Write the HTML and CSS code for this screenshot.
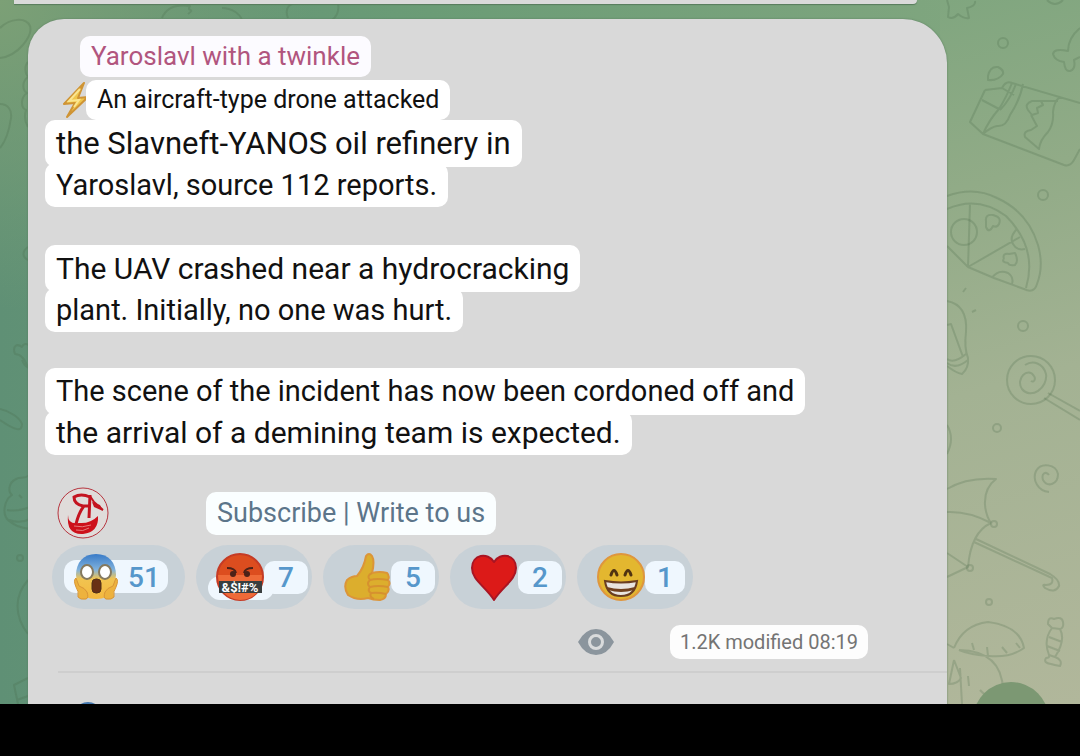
FILE: index.html
```html
<!DOCTYPE html>
<html lang="en">
<head>
<meta charset="utf-8">
<meta name="viewport" content="width=device-width, initial-scale=1">
<title>Yaroslavl with a twinkle</title>
<link rel="stylesheet" href="styles.css">
</head>
<body>
<main class="chat">
  <svg class="doodles doodles-left" width="400" height="704" viewBox="0 0 400 704" aria-hidden="true">
    <path d="M0 28C10 18 26 17 30 26C33 36 18 56 0 58M0 104C8 104 12 110 11 118C9 132 5 142 0 148M28 62C24 66 25 74 28 77C22 81 22 90 27 93C21 97 20 107 26 110C24 116 25 122 28 127M28 247C22 251 22 257 28 260M28 368C26 362 22 354 15 354C12 346 17 343 22 347C24 342 30 344 30 348M0 409C10 411 20 418 22 424C22 432 16 431 0 420M22 360C24 366 28 368 30 367M30 475C22 480 22 476 16 479C8 483 8 492 12 495C4 500 2 514 8 520C14 526 22 528 30 529M7 510Q18 512 30 507M9 520Q20 524 30 519M19 495L22 498M28 580C14 596 14 616 28 634M28 678L14 685L18 704M17 700L28 696M162 18C166 8 176 4 190 6C186 12 196 8 188 14M222 8C232 8 240 14 242 20M288 18C284 8 290 2 298 4M338 3Q340 14 332 20"/>
    <circle cx="20" cy="558" r="3"/>
  </svg>
  <svg class="doodles doodles-right" width="140" height="704" viewBox="0 0 140 704" aria-hidden="true">
    <path d="M7 0L9 7L8 17Q13 20 18 14Q24 19 29 18L27 8Q36 6 35 1M107 0Q115 8 123 0M140 28Q128 38 128 51Q114 48 113 54Q115 61 124 62Q125 72 130 71Q136 69 134 60L140 57"/>
    <path d="M48 76Q50 66 58 67Q64 70 63 74Q58 81 48 80ZM45 90L62 88Q66 80 72 83L140 103M45 90L30 122L43 134L124 165Q130 167 134 160L140 149M42 100L59 109M62 88L74 95M72 83Q66 98 59 109Q49 120 43 134M76 84Q70 100 60 110M83 84Q80 100 70 115Q66 127 57 126Q51 127 43 134M118 101L92 101Q84 104 88 110L92 115L98 113L97 108L103 105L101 101M91 115L97 126L91 130Q83 131 85 137L99 149Q100 140 108 132Q114 124 113 112Q114 101 120 97"/>
    <path d="M7 196Q34 186 57 198Q88 212 98 245Q104 266 97 284Q94 294 84 289L54 278L28 267L7 246M7 209Q38 195 66 216Q98 248 86 288M30 204L28 267L80 237M46 221Q45 214 53 215Q62 217 59 224Q57 228 53 226Q49 234 46 227ZM64 259Q62 253 69 254L75 253Q79 261 75 265Q69 266 68 263Q61 262 64 259M52 278Q58 269 68 273Q74 277 72 284M77 229Q69 237 73 244Q77 251 85 249"/>
    <circle cx="24" cy="232" r="13"/><circle cx="63" cy="43" r="5"/><circle cx="103" cy="195" r="5"/><circle cx="83" cy="326" r="5"/><circle cx="57" cy="428" r="4"/><circle cx="49" cy="602" r="3"/>
    <path d="M23 292L26 288M32 312L36 310M7 301Q28 305 26 332Q24 348 28 358Q29 368 22 374Q16 373 7 366M7 325L11 324L23 357M7 359Q14 364 26 354M7 363Q16 370 28 360M7 425Q15 438 7 454"/>
    <circle cx="91" cy="380" r="24"/>
    <path d="M91 381C94 383 96 379 94 376C88 366 75 379 82 389C91 400 108 388 106 374C103 363 93 360 85 365M108 393L140 411M104 398L140 420M109 492C98 491 92 480 96 471C101 462 116 464 118 474C118 484 108 488 103 480C101 473 106 471 109 475"/>
    <path d="M7 489Q27 477 56 479Q44 488 45 505Q46 516 51 523M7 512Q29 511 51 523M51 523Q31 532 28 567M7 553L28 567L7 577M36 539L110 574Q120 580 119 586Q115 594 105 588Q101 584 106 585Q114 585 112 578L34 542"/>
    <circle cx="54" cy="524" r="3"/><circle cx="30" cy="568" r="3"/>
    <path d="M14 648Q23 625 48 622Q80 626 84 648Q70 658 49 656Q31 655 19 650M32 643L34 650M48 656L47 647M67 653L62 647M80 648L76 643M7 644L14 648M19 650Q62 651 63 690Q64 700 54 698Q46 697 40 690M14 660L9 684Q18 684 21 678L14 660M20 668L22 704M28 676L29 686M108 624Q108 616 114 619Q122 616 123 622Q124 628 120 629Q126 640 115 657Q123 660 120 666Q114 665 111 664Q103 663 106 658Q110 658 109 655Q103 640 112 628ZM112 628L120 629M109 637L122 642M107 646L120 651M109 655L115 657"/>
  </svg>

  <div class="previous-message"></div>
  <article class="message">
    <h1 class="strip author">Yaroslavl with a twinkle</h1>
    <div class="lead">
      <svg class="bolt" width="30" height="38" viewBox="0 0 30 38" aria-hidden="true"><path d="M22 3L2 24L13 23L5 37L26 17L16 18Z" fill="#f0c64c" stroke="#cf9434" stroke-width="2" stroke-linejoin="round"/><path d="M18 9L7 21L17 20L12 27" fill="none" stroke="#fae58f" stroke-width="2"/></svg>
      <p class="strip small">An aircraft-type drone attacked</p>
    </div>
    <div class="paragraph">
      <p class="strip large">the Slavneft-YANOS oil refinery in</p>
      <p class="strip medium">Yaroslavl, source 112 reports.</p>
    </div>
    <div class="paragraph">
      <p class="strip body">The UAV crashed near a hydrocracking</p>
      <p class="strip medium">plant. Initially, no one was hurt.</p>
    </div>
    <div class="paragraph">
      <p class="strip wide-body">The scene of the incident has now been cordoned off and</p>
      <p class="strip medium closing">the arrival of a demining team is expected.</p>
    </div>
    <div class="links">
      <svg class="logo" width="52" height="52" viewBox="0 0 52 52" aria-hidden="true"><circle cx="26" cy="26" r="25" fill="#e0dcda" stroke="#b6353f" stroke-width="1"/><path d="M33 10Q24 6 17 10Q17 17 26 19L32 19M33 8L32 31M27 19Q22 25 19 37" fill="none" stroke="#c41420" stroke-width="3"/><path d="M33 9L37 15L46 23" fill="none" stroke="#c41420" stroke-width="2"/><path d="M35 15L43 18L46 24L37 20Z" fill="#c41420"/><path d="M11 28Q11 38 22 36Q33 37 41 29Q42 45 26 47Q9 48 11 28" fill="#cd111b"/><path d="M17 39Q25 41 34 38M19 43Q26 45 32 41" stroke="#e67a79" stroke-width="1" fill="none"/></svg>
      <nav class="strip link-strip"><a href="#subscribe">Subscribe</a> | <a href="#write">Write to us</a></nav>
    </div>
    <div class="reactions">
      <button class="reaction wide" type="button" aria-label="Screaming, 51">
        <svg class="emoji" width="48" height="48" viewBox="0 0 48 48" aria-hidden="true"><defs><linearGradient id="fear" x1="0" y1="0" x2="0" y2="1"><stop offset="0" stop-color="#387bc8"/><stop offset=".35" stop-color="#81b2dc"/><stop offset=".55" stop-color="#f1c451"/><stop offset="1" stop-color="#f4b83f"/></linearGradient></defs><path d="M24 1C11 1 4 10 4 22L6 38Q12 46 24 46Q36 46 42 38L44 22C44 10 37 1 24 1Z" fill="url(#fear)"/><path d="M4 25Q1 27 4 34Q7 38 6 44Q8 47 14 46Q17 45 15 39Q13 35 7 33ZM44 25Q47 27 44 34Q41 38 42 44Q40 47 34 46Q31 45 33 39Q35 35 41 33Z" fill="#edb23e" stroke="#d89538" stroke-width="1"/><ellipse cx="15" cy="19" rx="6" ry="7" fill="#fff" stroke="#85795e" stroke-width="2"/><ellipse cx="33" cy="19" rx="6" ry="7" fill="#fff" stroke="#85795e" stroke-width="2"/><rect x="20" y="26" width="9" height="14" rx="4" fill="#693015" stroke="#503019" stroke-width="1"/></svg>
        <span class="count">51</span>
      </button>
      <button class="reaction censored" type="button" aria-label="Swearing, 7">
        <svg class="emoji" width="48" height="48" viewBox="0 0 48 48" aria-hidden="true"><circle cx="24" cy="24" r="23" fill="#dc4d1f" stroke="#c53b25" stroke-width="2"/><path d="M2 22H46Q46 46 24 47Q3 45 2 22" fill="#ee6a38"/><path d="M11 15Q19 15 20 20M37 15Q29 15 28 20" fill="none" stroke="#4c2218" stroke-width="2"/><circle cx="17" cy="21" r="3" fill="#4c2218"/><circle cx="31" cy="21" r="3" fill="#4c2218"/><path d="M3 28H46V40H3Z" fill="#393e3f"/><text x="24" y="39" text-anchor="middle" class="oath">&amp;$!#%</text></svg>
        <span class="count">7</span>
      </button>
      <button class="reaction" type="button" aria-label="Thumbs up, 5">
        <svg class="emoji" width="48" height="48" viewBox="0 0 48 48" aria-hidden="true"><path d="M23 3Q26-1 29 3C32 8 30 16 29 20Q37 18 44 20Q47 23 45 27Q48 30 45 34Q47 38 43 41Q43 46 37 47Q30 47 25 45Q14 48 5 42Q0 34 4 27Q9 23 14 23Q21 15 23 3Z" fill="#dcae2d" stroke="#dc9538" stroke-width="2" stroke-linejoin="round"/><path d="M29 20Q23 23 27 27Q23 31 27 34Q24 38 28 40Q26 44 31 46M27 27Q34 25 45 27M27 34Q35 32 45 34M28 40Q35 39 43 41" fill="none" stroke="#d6912f" stroke-width="2"/></svg>
        <span class="count">5</span>
      </button>
      <button class="reaction" type="button" aria-label="Heart, 2">
        <svg class="emoji" width="48" height="48" viewBox="0 0 48 48" aria-hidden="true"><path d="M24 9C18-1 2 1 2 15C2 27 15 33 24 47C33 33 46 27 46 15C46 1 30-1 24 9Z" fill="#dc1a18" stroke="#a91523" stroke-width="2" stroke-linejoin="round"/></svg>
        <span class="count">2</span>
      </button>
      <button class="reaction spaced" type="button" aria-label="Grinning, 1">
        <svg class="emoji" width="48" height="48" viewBox="0 0 48 48" aria-hidden="true"><circle cx="24" cy="24" r="23" fill="#e3b72f" stroke="#df963d" stroke-width="2"/><path d="M14 22Q17 13 20 22M28 22Q31 13 34 22" fill="none" stroke="#503311" stroke-width="3" stroke-linecap="round"/><path d="M8 28Q24 31 40 28Q38 43 24 43Q10 43 8 28Z" fill="#e9e4df" stroke="#6b3e20" stroke-width="2"/><path d="M10 34Q24 38 38 34L37 37Q24 41 11 37Z" fill="#70401f"/></svg>
        <span class="count">1</span>
      </button>
    </div>
    <footer class="meta">
      <svg class="eye" width="36" height="26" viewBox="0 0 36 26" aria-hidden="true"><path d="M0 13Q7 0 18 0Q29 0 36 13Q29 26 18 26Q7 26 0 13" fill="#8b959d"/><circle cx="18" cy="13" r="6.5" fill="#8b959d" stroke="#d9dbdc" stroke-width="3"/></svg>
      <p class="strip meta-text">1.2K modified 08:19</p>
    </footer>
    <div class="comments"><span class="avatar"></span></div>
  </article>
</main>
<div class="system-bar"></div>
</body>
</html>
```
FILE: styles.css
```css
* { box-sizing: border-box; }

body {
  margin: 0;
  height: 100vh;
  display: flex;
  flex-direction: column;
  background: #000;
  font-family: Roboto, "Liberation Sans", sans-serif;
}

.chat {
  position: relative;
  flex: 1;
  min-height: 0;
  overflow: hidden;
  padding-right: 133px;
  background:
    linear-gradient(165deg, #80a67f 0, #91ab87 26%, #a3b293 54%, #b1b79b 100%) right / 140px 100% no-repeat,
    radial-gradient(circle at 0 0, #7ca076 0, rgba(118, 158, 118, 0) 24%),
    linear-gradient(90deg, #5f9075 0, #6b9c76 40%, #80a67f 90%);
}

.doodles {
  position: absolute;
  top: 0;
  fill: none;
  stroke: rgba(70, 100, 70, 0.22);
  stroke-width: 2;
  stroke-linejoin: round;
}

.doodles-left { left: 0; }
.doodles-right { right: 0; }

.chat::after {
  content: "";
  position: absolute;
  right: 31px;
  bottom: -54px;
  width: 76px;
  height: 76px;
  border-radius: 50%;
  background: #7c9873;
}

.previous-message {
  position: relative;
  height: 4px;
  margin: 0 30px 15px 14px;
  border-radius: 0 0 32px 2px;
  background: #dadada;
  box-shadow: 0 1px 1px #587c5d;
}

.message {
  position: relative;
  margin-left: 28px;
  padding: 17px 0 0 17px;
  min-height: 740px;
  border-radius: 36px 44px 0 0;
  background: #d9d9d9;
  box-shadow: 0 0 2px #587c5d;
}

.strip {
  position: relative;
  width: fit-content;
  margin: 0;
  padding: 0 11px;
  border-radius: 10px;
  background: #fff;
  color: #111;
  font-weight: 400;
  white-space: nowrap;
}

.author {
  margin-left: 35px;
  background: #fcfbff;
  color: #b1557e;
  font-size: 26px;
  line-height: 41px;
}

.lead {
  display: flex;
  margin: 3px 0 0 17px;
}

.bolt { margin-right: -6px; }

.small { font-size: 25px; line-height: 40px; }
.large { font-size: 31px; line-height: 47px; }
.body { font-size: 30px; line-height: 47px; }
.wide-body { font-size: 29px; line-height: 47px; }
.medium {
  margin-top: -4px;
  font-size: 29px;
  line-height: 44px;
}
.closing { font-size: 30px; }

.paragraph { margin-bottom: 38px; }
.paragraph + .paragraph { margin-bottom: 36px; }
.paragraph + .paragraph + .paragraph { margin-bottom: 32px; }

.links {
  display: flex;
  align-items: center;
  gap: 97px;
  margin-left: 12px;
}

.link-strip {
  background: #fafeff;
  color: #5c758a;
  font-size: 27px;
  line-height: 43px;
}

.link-strip a { color: inherit; text-decoration: none; }

.reactions {
  display: flex;
  gap: 11px;
  margin: 6px 0 0 7px;
}

.reaction {
  position: relative;
  display: flex;
  align-items: center;
  min-width: 116px;
  height: 64px;
  padding: 0 4px 0 20px;
  border: 0;
  border-radius: 32px;
  background: #c8d1d7;
  font-family: inherit;
}

.emoji { position: relative; flex: none; }

.count {
  position: relative;
  flex: 1;
  border-radius: 10px;
  background: #eff7fe;
  color: #5697cb;
  font-size: 28px;
  font-weight: 500;
  line-height: 33px;
  text-align: center;
}

.spaced { padding-right: 8px; }
.wide { min-width: 133px; padding-right: 17px; }
.wide .count { background: none; }
.wide::before,
.censored::before {
  content: "";
  position: absolute;
  border-radius: 12px;
  background: #eff7fe;
}
.wide::before { left: 12px; top: 15px; width: 104px; height: 33px; }
.censored::before { left: 12px; top: 31px; width: 66px; height: 24px; }

.oath {
  fill: #fff;
  font-family: Roboto, sans-serif;
  font-size: 13px;
  font-weight: 700;
}

.meta {
  display: flex;
  align-items: center;
  justify-content: flex-end;
  gap: 56px;
  margin: 16px 79px 0 0;
}

.meta-text {
  padding: 0 10px;
  background: #fdfdfd;
  color: #747474;
  font-size: 20px;
  line-height: 34px;
}

.comments {
  margin: 12px 0 0 13px;
  padding: 29px 0 0 16px;
  border-top: 2px solid #cecece;
}

.avatar {
  display: block;
  width: 28px;
  height: 28px;
  border-radius: 50%;
  background: #4478ae;
}

.system-bar { flex: none; height: 52px; background: #000; }
```
